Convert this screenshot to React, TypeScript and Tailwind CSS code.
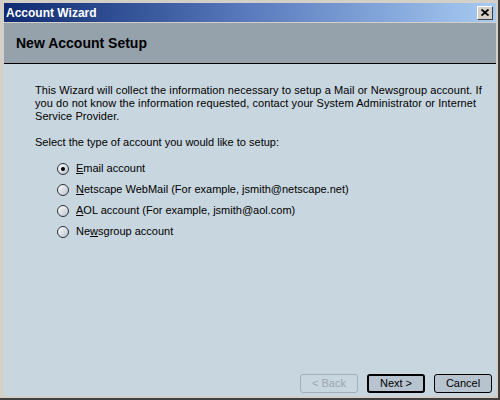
import React from "react";

const font = { fontFamily: '"Liberation Sans", Arial, sans-serif' };

function Radio({ checked }: { checked?: boolean }) {
  return (
    <span className="flex h-[12px] w-[12px] shrink-0 items-center justify-center rounded-full border border-[#2e3338] bg-gradient-to-br from-[#ffffff] to-[#b9c3cc]">
      {checked && <span className="h-[4px] w-[4px] rounded-full bg-black" />}
    </span>
  );
}

function Option({ pre = "", k, rest, checked }: { pre?: string; k: string; rest: string; checked?: boolean }) {
  return (
    <label className="flex h-[21px] items-center gap-[7px]">
      <Radio checked={checked} />
      <span>
        {pre}
        <span className="underline underline-offset-1">{k}</span>
        {rest}
      </span>
    </label>
  );
}

function Btn({ label, variant }: { label: string; variant?: "default" | "disabled" }) {
  const base = "flex h-[19px] w-[58px] items-center justify-center rounded-[3px] text-[11px]";
  if (variant === "disabled")
    return <div className={`${base} border border-[#a3aeb8] text-[#9ba6b0]`}>{label}</div>;
  if (variant === "default")
    return <div className={`${base} border-2 border-black bg-[#b7c4cf] text-black`}>{label}</div>;
  return <div className={`${base} border border-black bg-[#b7c4cf] text-black`}>{label}</div>;
}

export default function App() {
  return (
    <div
      className="flex h-[400px] w-[500px] flex-col border-b-2 border-r-2 border-[#404040] bg-[#d4d0c8] pb-[2px] pl-[4px] pr-[2px] pt-[3px]"
      style={font}
    >
      {/* title bar */}
      <div className="flex h-[19px] items-center justify-between bg-gradient-to-r from-[#0f2a72] via-[#5a7bbd] to-[#a8cbf2] pl-[2px] pr-[3px]">
        <span className="text-[12px] font-bold text-white">Account Wizard</span>
        <div className="flex h-[14px] w-[16px] items-center justify-center border border-b-[#404040] border-l-white border-r-[#404040] border-t-white bg-[#d4d0c8]">
          <svg width="8" height="7" viewBox="0 0 8 7">
            <path d="M0.5 0.5 L7.5 6.5 M7.5 0.5 L0.5 6.5" stroke="black" strokeWidth="1.8" />
          </svg>
        </div>
      </div>

      {/* header */}
      <div className="mt-[1px] flex h-[41px] items-center border-b border-black bg-[#95a1ab] pl-[12px]">
        <span className="text-[14px] font-bold text-black">New Account Setup</span>
      </div>

      {/* body */}
      <div className="flex flex-1 flex-col bg-[#c8d6df] text-[11px] leading-[13px] text-black">
        <div className="pl-[31px] pt-[20px]">
          <p className="whitespace-nowrap tracking-[0.08px]">
            This Wizard will collect the information necessary to setup a Mail or Newsgroup account. If
            <br />
            you do not know the information requested, contact your System Administrator or Internet
            <br />
            Service Provider.
          </p>
          <p className="mt-[13px]">Select the type of account you would like to setup:</p>
          <div className="ml-[22px] mt-[9px] flex flex-col">
            <Option k="E" rest="mail account" checked />
            <Option k="N" rest="etscape WebMail (For example, jsmith@netscape.net)" />
            <Option k="A" rest="OL account (For example, jsmith@aol.com)" />
            <Option pre="Ne" k="w" rest="sgroup account" />
          </div>
        </div>
        <div className="flex-1" />
        <div className="flex justify-end gap-[9px] pb-[3px] pr-[4px]">
          <Btn label="< Back" variant="disabled" />
          <Btn label="Next >" variant="default" />
          <Btn label="Cancel" />
        </div>
      </div>
    </div>
  );
}
